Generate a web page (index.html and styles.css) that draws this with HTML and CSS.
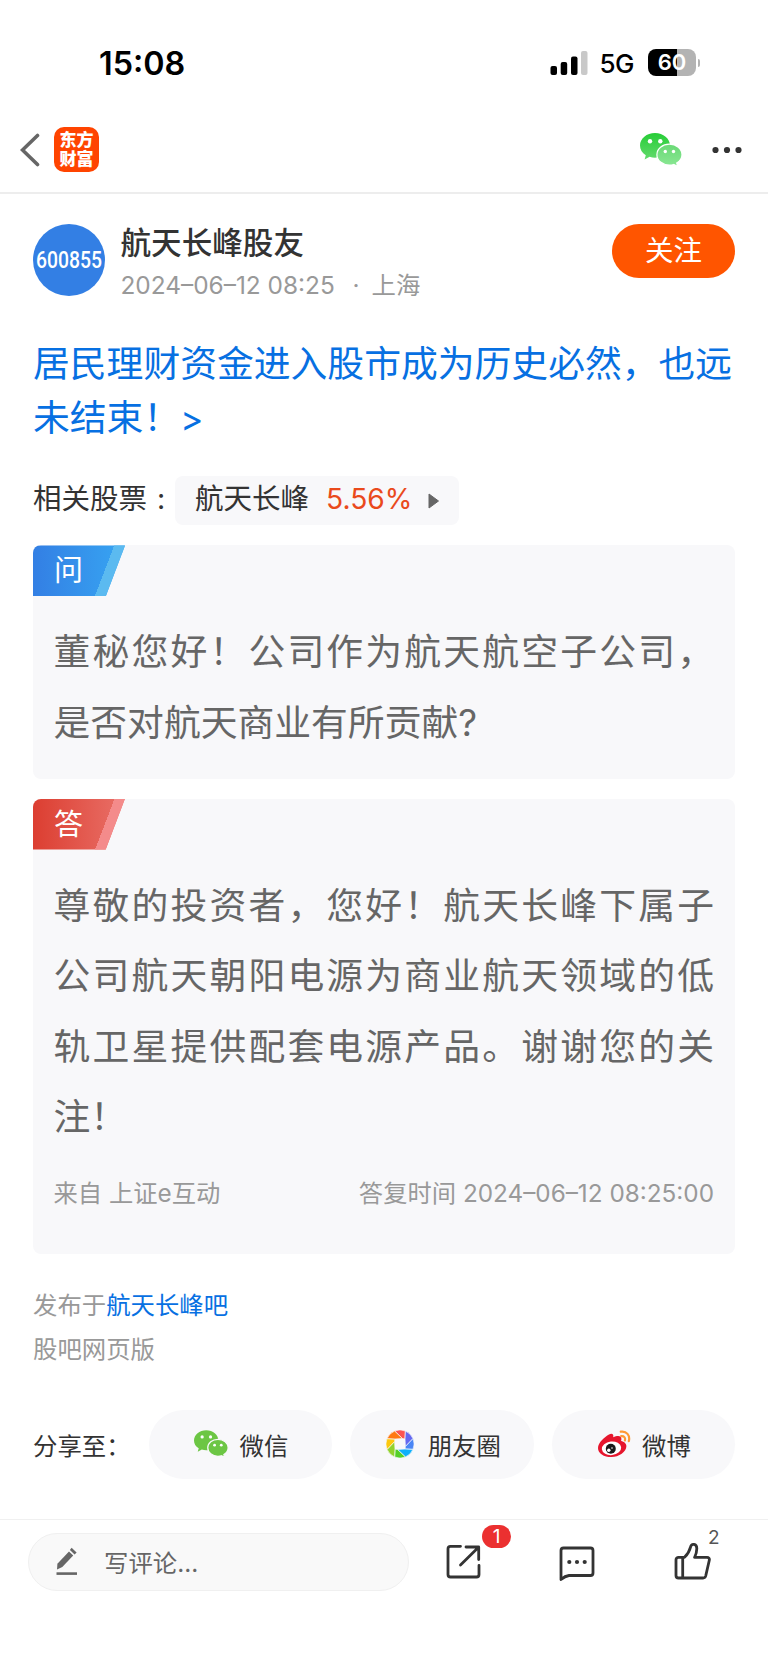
FILE: index.html
```
<!DOCTYPE html>
<html lang="zh-CN">
<head>
    <meta charset="UTF-8">
    <meta name="viewport" content="width=device-width, initial-scale=1.0">
    <title>航天长峰股友</title>
    <link rel="stylesheet" href="styles.css">
</head>
<body>

<!-- Status bar -->
<div class="status-bar">
    <span class="time">15:08</span>
    <svg class="signal" width="38" height="26" viewBox="0 0 38 26">
        <rect x="0.5" y="16" width="6.5" height="9" rx="2"/>
        <rect x="10.7" y="12" width="6.5" height="13" rx="2"/>
        <rect x="21" y="6.5" width="6.5" height="18.5" rx="2"/>
        <rect x="31" y="1" width="6.5" height="24" rx="2" fill="#c9c9c9"/>
    </svg>
    <span class="network">5G</span>
    <div class="battery">60</div>
    <i class="battery-tip"></i>
</div>

<!-- Navigation -->
<div class="navbar">
    <svg class="back" width="20" height="34" viewBox="0 0 20 34">
        <path d="M17.5 2.5 L2.5 17 L17.5 31.5" fill="none" stroke="#666" stroke-width="3.6" stroke-linecap="round"/>
    </svg>
    <div class="logo"><span>东方</span><span>财富</span></div>
    <svg class="nav-wechat" width="43" height="34" viewBox="0 0 43 34">
        <defs>
            <linearGradient id="wxBack" x1="0" y1="0" x2="0" y2="1">
                <stop offset="0" stop-color="#26cd36"/>
                <stop offset="1" stop-color="#62da6c"/>
            </linearGradient>
            <linearGradient id="wxFront" x1="0" y1="0" x2="0" y2="1">
                <stop offset="0" stop-color="#69d975"/>
                <stop offset="1" stop-color="#8be794"/>
            </linearGradient>
        </defs>
        <path d="M15 0C6.7 0 0 5.5 0 12.6c0 4 2 7.3 5.8 9.7L4.6 26.4l5-2.6c1.8.6 3.5.9 5.4.9 8.3 0 15-5.3 15-12.1S23.3 0 15 0z" fill="url(#wxBack)"/>
        <circle cx="10" cy="8.3" r="2.2" fill="#fff"/>
        <circle cx="20.3" cy="8.3" r="2.2" fill="#fff"/>
        <path d="M29.4 11.2c-7 0-12.5 4.7-12.5 10.5s5.5 10.4 12.5 10.4c1.6 0 3-.2 4.3-.6l4 2-1-3.5c3.2-2 5.3-4.9 5.3-8.3 0-5.8-5.6-10.5-12.6-10.5z" fill="url(#wxFront)" stroke="#fff" stroke-width="1.2"/>
        <circle cx="25.3" cy="18.5" r="1.7" fill="#fff"/>
        <circle cx="33.5" cy="18.5" r="1.7" fill="#fff"/>
    </svg>
    <svg class="more" width="30" height="8" viewBox="0 0 30 8" fill="#333">
        <circle cx="3.5" cy="4" r="3.1"/>
        <circle cx="15" cy="4" r="3.1"/>
        <circle cx="26.5" cy="4" r="3.1"/>
    </svg>
</div>

<div class="post">
    <!-- Author -->
    <div class="author">
        <svg class="avatar" width="72" height="72" viewBox="0 0 72 72">
            <circle cx="36" cy="36" r="36" fill="#337fe4"/>
            <text x="3" y="43.5" textLength="66" lengthAdjust="spacingAndGlyphs">600855</text>
        </svg>
        <div class="author-info">
            <div class="name">航天长峰股友</div>
            <div class="meta"><span class="date">2024–06–12 08:25</span><span class="dot">·</span><span>上海</span></div>
        </div>
        <button class="follow">关注</button>
    </div>

    <h1 class="title">居民理财资金进入股市成为历史必然，也远未结束！<span class="arrow">&gt;</span></h1>

    <!-- Related stock -->
    <div class="stocks">
        <span class="stocks-label">相关股票</span><span class="stocks-colon">:</span>
        <div class="stock">
            <span>航天长峰</span>
            <span class="percent">5.56%</span>
            <svg width="11" height="16" viewBox="0 0 11 16"><path d="M1 1 L10.5 8 L1 15z" fill="#666" stroke="#666" stroke-linejoin="round"/></svg>
        </div>
    </div>

    <!-- Question -->
    <div class="card">
        <div class="tag tag-ask"><span>问</span></div>
        <p class="text">董秘您好！公司作为航天航空子公司，是否对航天商业有所贡献?</p>
    </div>

    <!-- Answer -->
    <div class="card card-answer">
        <div class="tag tag-reply"><span>答</span></div>
        <p class="text">尊敬的投资者，您好！航天长峰下属子公司航天朝阳电源为商业航天领域的低轨卫星提供配套电源产品。谢谢您的关注！</p>
        <div class="source">
            <span>来自 上证e互动</span>
            <span class="reply-time">答复时间 2024–06–12 08:25:00</span>
        </div>
    </div>

    <div class="published">
        <div>发布于<a class="bar-link">航天长峰吧</a></div>
        <div>股吧网页版</div>
    </div>

    <!-- Share -->
    <div class="share">
        <span class="share-label">分享至：</span>
        <div class="share-btn">
            <svg width="35" height="28" viewBox="0 0 43 34">
                <path d="M15 0C6.7 0 0 5.5 0 12.6c0 4 2 7.3 5.8 9.7L4.6 26.4l5-2.6c1.8.6 3.5.9 5.4.9 8.3 0 15-5.3 15-12.1S23.3 0 15 0z" fill="#6cc644"/>
                <circle cx="10" cy="8.3" r="2" fill="#fff"/>
                <circle cx="20.3" cy="8.3" r="2" fill="#fff"/>
                <path d="M29.4 11.2c-7 0-12.5 4.7-12.5 10.5s5.5 10.4 12.5 10.4c1.6 0 3-.2 4.3-.6l4 2-1-3.5c3.2-2 5.3-4.9 5.3-8.3 0-5.8-5.6-10.5-12.6-10.5z" fill="#6cc644" stroke="#f8f8fa" stroke-width="1.6"/>
                <circle cx="25.3" cy="18.5" r="1.7" fill="#fff"/>
                <circle cx="33.5" cy="18.5" r="1.7" fill="#fff"/>
            </svg>
            <span>微信</span>
        </div>
        <div class="share-btn share-moments">
            <svg width="28" height="28" viewBox="-14 -14 28 28" stroke="#f8f8fa" stroke-width="0.7">
                <path d="M-5.4 -13 A14 14 0 0 1 5.4 -13 L5 -5 L2.5 -5.4z" fill="#fa5452"/>
                <path d="M5.4 -13 A14 14 0 0 1 13 -5.4 L5.4 2.5 L5 -5z" fill="#6468f0"/>
                <path d="M13 -5.4 A14 14 0 0 1 13 5.4 L5 5 L5.4 2.5z" fill="#4a86f5"/>
                <path d="M13 5.4 A14 14 0 0 1 5.4 13 L-2.5 5.4 L5 5z" fill="#0fb0fb"/>
                <path d="M5.4 13 A14 14 0 0 1 -5.4 13 L-5 5 L-2.5 5.4z" fill="#55cf28"/>
                <path d="M-5.4 13 A14 14 0 0 1 -13 5.4 L-5.4 -2.5 L-5 5z" fill="#91d22c"/>
                <path d="M-13 5.4 A14 14 0 0 1 -13 -5.4 L-5 -5 L-5.4 -2.5z" fill="#fcc80d"/>
                <path d="M-13 -5.4 A14 14 0 0 1 -5.4 -13 L2.5 -5.4 L-5 -5z" fill="#ff7912"/>
            </svg>
            <span>朋友圈</span>
        </div>
        <div class="share-btn share-weibo">
            <svg width="34" height="28" viewBox="0 0 34 28">
                <path d="M11 4.5c2.8-1.6 5-.6 4.2 2.8 3.6-1.5 8.2-2.3 8.2 1.6 0 1-.4 1.7-.2 2 2.6.6 5.2 2.2 5.2 5.2 0 6-7.4 11-15 11S0 23.5 0 18C0 12.5 6.5 7 11 4.5z" fill="#e6162d"/>
                <ellipse cx="13.5" cy="18.3" rx="9.7" ry="6.8" fill="#fff" transform="rotate(-6 13.5 18.3)"/>
                <circle cx="12.8" cy="18.8" r="5" fill="#1b1b1b"/>
                <circle cx="10.8" cy="20.2" r="1.7" fill="#fff"/>
                <circle cx="14" cy="18" r="0.8" fill="#fff"/>
                <path d="M22.8 1.7c5.6-1 9.6 3.6 8 9.4M23.2 6.2c2.8-.4 4.4 1.5 3.7 4.2" fill="none" stroke="#ff9933" stroke-width="2.2" stroke-linecap="round"/>
            </svg>
            <span>微博</span>
        </div>
    </div>
</div>

<!-- Bottom toolbar -->
<div class="toolbar">
    <div class="comment-input">
        <svg width="22" height="30" viewBox="0 0 22 30" fill="#666">
            <path d="M13 4.6 L17.2 8.4 L6.3 20 L1 22.4 L1.4 16.8z"/>
            <path d="M15.6 0.8 L20.6 5.6 L18.6 7.6 L13.9 3z"/>
            <rect x="0.5" y="25.3" width="20.5" height="2.6"/>
        </svg>
        <span>写评论...</span>
    </div>
    <div class="tool tool-share">
        <svg width="36" height="36" viewBox="0 0 36 36">
            <path d="M14.5 2.3 H4.5 a2.5 2.5 0 0 0 -2.5 2.5 V30.5 a2.5 2.5 0 0 0 2.5 2.5 H30.5 a2.5 2.5 0 0 0 2.5 -2.5 V21.5 M20 3 H32.7 V15.5 M32.5 3.3 L14.5 21"/>
        </svg>
        <span class="badge">1</span>
    </div>
    <div class="tool tool-comment">
        <svg width="36" height="36" viewBox="0 0 36 36">
            <path d="M2 33.5 V4.5 a2.5 2.5 0 0 1 2.5 -2.5 H31.5 a2.5 2.5 0 0 1 2.5 2.5 V27 a2.5 2.5 0 0 1 -2.5 2.5 H10 Q6 30 2 33.5z"/>
            <g class="dots"><circle cx="10.3" cy="16" r="2.1"/><circle cx="18" cy="16" r="2.1"/><circle cx="25.7" cy="16" r="2.1"/></g>
        </svg>
    </div>
    <div class="tool tool-like">
        <svg width="37" height="38" viewBox="0 0 37 38">
            <path d="M4.5 15.3 H10.5 C13.5 12.5 15.5 9 16.6 4.8 C17.5 1.2 22.8 1.5 22.8 6.5 C22.8 9.5 22.2 12 20.6 15.3 H33 a2.3 2.3 0 0 1 2.3 2.9 L31.7 34 a2.7 2.7 0 0 1 -2.6 2 H4.5 a2.5 2.5 0 0 1 -2.5 -2.5 V17.8 a2.5 2.5 0 0 1 2.5 -2.5z M8.7 15.3 V36"/>
        </svg>
        <span class="count">2</span>
    </div>
</div>

</body>
</html>
```

FILE: styles.css
```
* {
    box-sizing: border-box;
}
body {
    margin: 0;
    background-color: #fff;
    color: #333;
    font-family: 'Inter', 'Noto Sans CJK SC', sans-serif;
    text-spacing-trim: space-all;
}
svg {
    display: block;
    flex: none;
}
.status-bar {
    display: flex;
    align-items: center;
    height: 100px;
    padding: 25px 68px 0 99px;
    color: #000;
}
.time {
    flex: 1;
    padding-top: 1px;
    font-size: 32.3px;
    font-weight: 600;
}
.network {
    margin: 1px 14px 0 11px;
    font-size: 26px;
    font-weight: 500;
    letter-spacing: -0.5px;
}
.battery {
    width: 48px;
    height: 27px;
    border-radius: 8px;
    background: linear-gradient(90deg, #000 60%, #b3b3b3 60%);
    color: #fff;
    font-size: 22px;
    font-weight: 600;
    line-height: 27px;
    text-align: center;
}
.battery-tip {
    width: 2px;
    height: 8px;
    margin-left: 2px;
    border-radius: 0 3px 3px 0;
    background-color: #b3b3b3;
}

.navbar {
    display: flex;
    align-items: center;
    height: 94px;
    padding: 13px 26px 6px 20px;
    border-bottom: 2px solid #ededed;
}
.logo {
    display: flex;
    flex-direction: column;
    justify-content: center;
    align-items: center;
    width: 45px;
    height: 45px;
    margin: 0 auto 0 14px;
    border-radius: 10px;
    background-color: #ff4400;
    color: #fff;
    font-size: 17px;
    font-weight: 900;
    line-height: 19px;
}
.more {
    margin-left: 29px;
}

.post {
    padding: 30px 33px 40px;
}
.author {
    display: flex;
    align-items: flex-start;
    height: 72px;
}
.avatar text {
    fill: #fff;
    font-family: 'Roboto', sans-serif;
    font-size: 23.5px;
    font-weight: 500;
}
.author-info {
    flex: 1;
    padding-left: 15.5px;
}
.name {
    font-size: 30.6px;
    font-weight: 500;
    line-height: 37px;
}
.meta {
    display: flex;
    margin-top: 4px;
    color: #999;
    font-size: 24.4px;
    line-height: 40px;
}
.date {
    width: 214px;
    white-space: nowrap;
}
.dot {
    width: 37px;
    padding-left: 6px;
    text-align: center;
}
.follow {
    width: 123px;
    height: 54px;
    padding: 0;
    border: none;
    border-radius: 27px;
    background-color: #ff5500;
    color: #fff;
    font-family: inherit;
    font-size: 28.5px;
    line-height: 54px;
}
.title {
    margin: 41px 0 32px;
    color: #0770e2;
    font-size: 36.8px;
    font-weight: 400;
    line-height: 53.7px;
}
.arrow {
    font-size: 35px;
    line-height: 1;
}

.stocks {
    display: flex;
    align-items: center;
    font-size: 28.5px;
    line-height: 46px;
}
.stocks-label {
    height: 49px;
}
.stocks-colon {
    width: 28px;
    height: 49px;
    text-align: center;
}
.stock {
    display: flex;
    align-items: center;
    width: 284px;
    height: 49px;
    padding: 0 0 3px 20px;
    border-radius: 8px;
    background-color: #f8f8fa;
}
.stock svg {
    margin-top: 4px;
}
.percent {
    width: 84px;
    margin: 0 18px 0 17px;
    color: #ea4a1c;
    font-size: 28.2px;
    white-space: nowrap;
}

.card {
    margin-top: 20px;
    padding-bottom: 20px;
    border-radius: 8px;
    background-color: #f8f8fa;
    overflow: hidden;
}
.tag {
    width: 92px;
    height: 51px;
    padding-left: 21px;
    clip-path: polygon(0 0, 100% 0, 79% 100%, 0 100%);
    color: #fff;
    font-size: 29px;
    line-height: 51px;
}
.tag-ask {
    background: linear-gradient(111deg, transparent 73%, #5bbaf0 73%), linear-gradient(90deg, #337fe4, #37a5f2);
}
.tag-reply {
    background: linear-gradient(111deg, transparent 73%, #f48b8b 73%), linear-gradient(90deg, #dc3e31, #e97068);
}
.text {
    margin: 21px 21px 0 20.5px;
    color: #666;
    font-size: 36.8px;
    line-height: 70.6px;
    text-align: justify;
}
.card-answer {
    padding-bottom: 41px;
}
.source {
    display: flex;
    justify-content: space-between;
    margin: 20px 21px 0 20.5px;
    color: #999;
    font-size: 24.3px;
    line-height: 40px;
    white-space: nowrap;
}

.published {
    margin-top: 29px;
    color: #999;
    font-size: 24.4px;
    line-height: 44.5px;
}
.bar-link {
    color: #0770e2;
}

.share {
    display: flex;
    align-items: center;
    gap: 17.5px;
    margin-top: 38px;
    font-size: 24.4px;
}
.share-label {
    width: 98px;
    white-space: nowrap;
}
.share-btn {
    display: flex;
    flex: 1;
    align-items: center;
    justify-content: center;
    gap: 10.5px;
    height: 69px;
    padding-left: 2px;
    border-radius: 35px;
    background-color: #f8f8fa;
}
.share-moments {
    gap: 14px;
    padding-left: 3px;
}

.toolbar {
    display: flex;
    align-items: flex-start;
    height: 151px;
    padding: 13px 0 0 28px;
    border-top: 1px solid #f0f0f0;
}
.comment-input {
    display: flex;
    align-items: center;
    gap: 26px;
    width: 381px;
    height: 58px;
    padding-left: 27px;
    border: 1px solid #f0f0f0;
    border-radius: 29px;
    background-color: #f9f9f9;
    color: #666;
    font-size: 24.4px;
}
.tool {
    position: relative;
    fill: none;
    stroke: #333;
    stroke-width: 2.8px;
    stroke-linecap: round;
    stroke-linejoin: round;
}
.tool-share {
    margin: 11px 0 0 37px;
}
.tool-comment {
    margin: 13px 0 0 77px;
}
.tool-like {
    margin: 9px 0 0 79px;
}
.dots {
    fill: #333;
    stroke: none;
}
.badge {
    position: absolute;
    left: 36px;
    top: -19px;
    width: 29px;
    height: 23px;
    border-radius: 12px;
    background-color: #eb3030;
    color: #fff;
    font-size: 19px;
    line-height: 23px;
    text-align: center;
}
.count {
    position: absolute;
    left: 34px;
    top: -16px;
    color: #555;
    font-size: 19px;
    line-height: 23px;
}
```
